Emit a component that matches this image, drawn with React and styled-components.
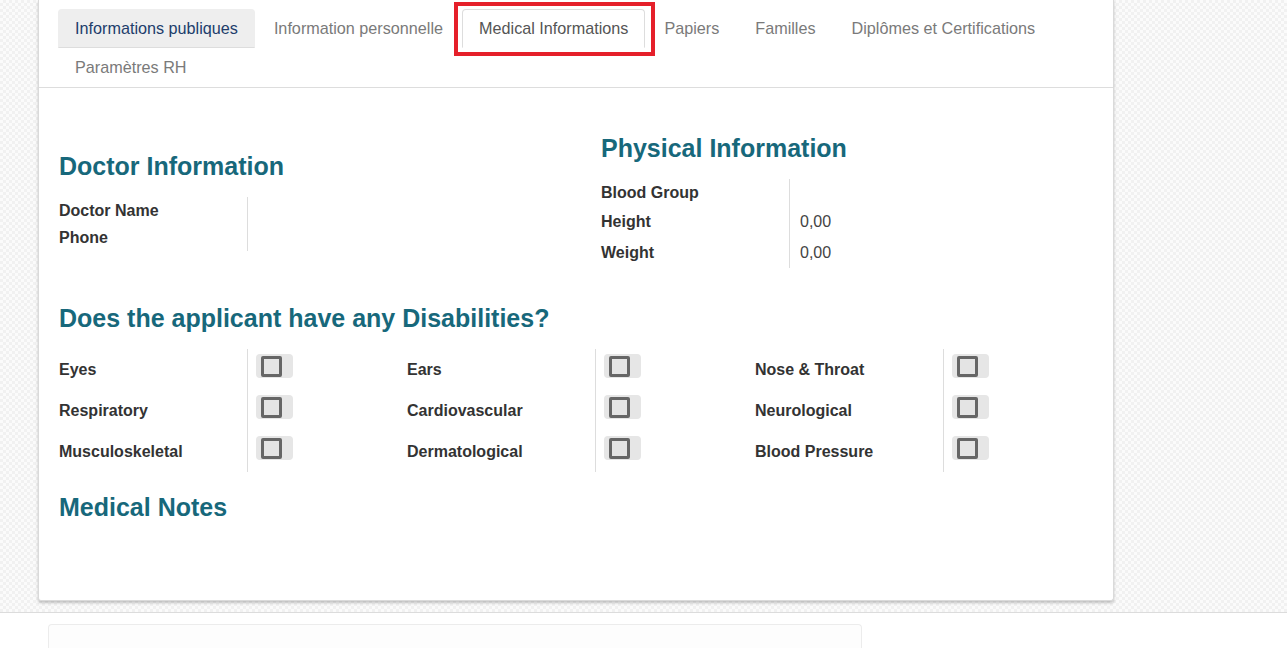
import React from "react";
import styled, { createGlobalStyle } from "styled-components";

const GlobalStyle = createGlobalStyle`
  html, body {
    margin: 0;
    padding: 0;
    height: 648px;
    overflow: hidden;
    background: #fff;
    font-family: "Liberation Sans", Arial, sans-serif;
  }
`

const Backdrop = styled.div`
  height: 613px;
  box-sizing: border-box;
  padding-left: 38px;
  border-bottom: 1px solid #dcdcdc;
  background-color: #f8f8f8;
  background-image: repeating-conic-gradient(#f1f1f1 0 25%, #fbfbfb 0 50%);
  background-size: 6px 6px;
`

const Sheet = styled.div`
  width: 1076px;
  height: 601px;
  box-sizing: border-box;
  background: #fff;
  border: 1px solid #dadada;
  border-top: none;
  border-radius: 0 0 3px 3px;
  box-shadow: 0 2px 3px rgba(0, 0, 0, 0.22);
`

const TabBar = styled.ul`
  list-style: none;
  margin: 0;
  padding: 9px 20px 0 19px;
  display: flex;
  flex-wrap: wrap;
  border-bottom: 1px solid #dddddd;
`

const Tab = styled.li`
  position: relative;
  box-sizing: border-box;
  height: 39px;
  margin-right: 2px;
  padding: 10px 16px;
  font-size: 16.2px;
  line-height: 17px;
  white-space: nowrap;
  border: 1px solid transparent;
  border-radius: 4px 4px 0 0;
  color: ${(p) => (p.$hover ? "#213d6b" : p.$active ? "#555" : "#7a7a7a")};
  background: ${(p) => (p.$hover ? "#eeeeee" : p.$active ? "#fff" : "transparent")};
  ${(p) => p.$hover && "border-bottom-color: #dddddd;"}
  ${(p) => p.$active && "border-color: #dddddd; border-bottom-color: transparent;"}
`

const Highlight = styled.span`
  position: absolute;
  left: -9px;
  right: -11px;
  top: -8px;
  bottom: -9px;
  border: 4px solid #e5202a;
  pointer-events: none;
`

const Content = styled.div`
  padding: 0 20px;
`

const Columns = styled.div`
  display: grid;
  grid-template-columns: 542px 1fr;
  align-items: start;
`

const Column = styled.div`
  padding-top: ${(p) => p.$top}px;
`

const Heading = styled.h2`
  margin: ${(p) => p.$top || 0}px 0 16px;
  font-size: 25px;
  line-height: 30px;
  font-weight: bold;
  color: #17687b;
`

const FieldGroup = styled.div`
  display: grid;
  grid-template-columns: 188px 1fr;
`

const Label = styled.div`
  height: ${(p) => p.$h || 27}px;
  display: flex;
  align-items: center;
  font-size: 16px;
  font-weight: bold;
  color: #333;
`

const Value = styled.div`
  height: ${(p) => p.$h || 27}px;
  display: flex;
  align-items: center;
  padding-left: 10px;
  border-left: 1px solid #dddddd;
  font-size: 16px;
  color: #444;
`

const DisabilityGrid = styled.div`
  display: grid;
  grid-template-columns: repeat(3, 348px);
`

const CheckGroup = styled.div`
  display: grid;
  grid-template-columns: 188px 1fr;
`

const CheckLabel = styled.div`
  height: 41px;
  padding-top: 11px;
  box-sizing: border-box;
  font-size: 16px;
  line-height: 20px;
  font-weight: bold;
  color: #333;
`

const CheckCell = styled.div`
  height: 41px;
  padding: 5px 0 0 8px;
  box-sizing: border-box;
  border-left: 1px solid #dddddd;
`

const CheckPill = styled.span`
  display: flex;
  align-items: center;
  width: 37px;
  height: 24px;
  padding-left: 5px;
  box-sizing: border-box;
  background: #e6e6e6;
  border-radius: 4px;
`

const CheckBox = styled.span`
  width: 21px;
  height: 21px;
  box-sizing: border-box;
  border: 3px solid #666;
  border-radius: 2px;
  background: #e4e4e4;
`

const Lower = styled.div`
  padding: 11px 0 0 48px;
`

const Chatter = styled.div`
  width: 812px;
  height: 40px;
  border: 1px solid #ececec;
  border-bottom: none;
  border-radius: 4px 4px 0 0;
  background: #fdfdfd;
`

const tabs = [
  "Informations publiques",
  "Information personnelle",
  "Medical Informations",
  "Papiers",
  "Familles",
  "Diplômes et Certifications",
  "Paramètres RH",
];

const disabilities = [
  ["Eyes", "Respiratory", "Musculoskeletal"],
  ["Ears", "Cardiovascular", "Dermatological"],
  ["Nose & Throat", "Neurological", "Blood Pressure"],
];

const App = () => {
  return (
    <>
      <GlobalStyle />
      <Backdrop>
        <Sheet>
          <TabBar>
            {tabs.map((t, i) => (
              <Tab key={t} $hover={i === 0} $active={i === 2}>
                {t}
                {i === 2 && <Highlight />}
              </Tab>
            ))}
          </TabBar>
          <Content>
            <Columns>
              <Column $top={63}>
                <Heading>Doctor Information</Heading>
                <FieldGroup>
                  <Label>Doctor Name</Label>
                  <Value />
                  <Label>Phone</Label>
                  <Value />
                </FieldGroup>
              </Column>
              <Column $top={45}>
                <Heading>Physical Information</Heading>
                <FieldGroup>
                  <Label $h={27}>Blood Group</Label>
                  <Value $h={27} />
                  <Label $h={31}>Height</Label>
                  <Value $h={31}>0,00</Value>
                  <Label $h={31}>Weight</Label>
                  <Value $h={31}>0,00</Value>
                </FieldGroup>
              </Column>
            </Columns>
            <Heading $top={35}>Does the applicant have any Disabilities?</Heading>
            <DisabilityGrid>
              {disabilities.map((col, ci) => (
                <CheckGroup key={ci}>
                  {col.map((name) => (
                    <React.Fragment key={name}>
                      <CheckLabel>{name}</CheckLabel>
                      <CheckCell>
                        <CheckPill>
                          <CheckBox />
                        </CheckPill>
                      </CheckCell>
                    </React.Fragment>
                  ))}
                </CheckGroup>
              ))}
            </DisabilityGrid>
            <Heading $top={20}>Medical Notes</Heading>
          </Content>
        </Sheet>
      </Backdrop>
      <Lower>
        <Chatter />
      </Lower>
    </>
  );
};

export default App;
